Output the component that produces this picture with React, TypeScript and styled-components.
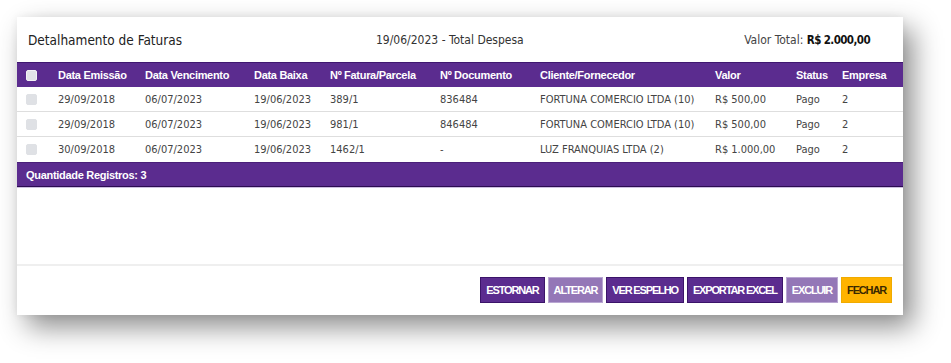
import React from "react";
import styled, { createGlobalStyle } from "styled-components";

const GlobalStyle = createGlobalStyle`
  html, body { margin: 0; padding: 0; background: #ffffff; }
  body { font-family: "DejaVu Sans Condensed", "DejaVu Sans", sans-serif; }
  * { box-sizing: border-box; }
`;

const COLS = "41px 87px 109px 76px 110px 100px 175px 81px 46px 61px";
const PURPLE = "#5b2c8f";

const Page = styled.div`
  padding: 17px 0 0 17px;
  width: 951px;
  height: 363px;
  overflow: hidden;
`;

const Panel = styled.div`
  width: 886px;
  background: #fff;
  display: flex;
  flex-direction: column;
  box-shadow: 10px 12px 26px rgba(0, 0, 0, 0.45), 0 0 8px rgba(0, 0, 0, 0.06);
`;

const TopBar = styled.div`
  height: 45px;
  display: grid;
  grid-template-columns: 348px auto 1fr;
  align-items: center;
  padding: 0 33px 0 11px;
`;

const Title = styled.div`
  font-size: 13.5px;
  color: #222;
`;

const Subtitle = styled.div`
  font-size: 12px;
  color: #333;
`;

const Total = styled.div`
  justify-self: end;
  font-size: 12px;
  color: #444;
  white-space: nowrap;
  b {
    font-size: 11.5px;
    letter-spacing: -0.6px;
    color: #111;
    font-weight: bold;
  }
`;

const HeadRow = styled.div`
  display: grid;
  grid-template-columns: ${COLS};
  height: 25px;
  align-items: center;
  background: ${PURPLE};
  border-top: 1px solid #3f1770;
  color: #fff;
  font-family: "Liberation Sans", Arial, sans-serif;
  font-weight: bold;
  font-size: 11px;
  letter-spacing: -0.3px;
  white-space: nowrap;
`;

const Row = styled.div`
  display: grid;
  grid-template-columns: ${COLS};
  height: 25px;
  align-items: center;
  border-bottom: 1px solid #dedede;
  color: #444;
  font-size: 11px;
  white-space: nowrap;
  &:last-of-type {
    border-bottom: none;
  }
`;

const Rows = styled.div`
  display: flex;
  flex-direction: column;
`;

const CheckCell = styled.div`
  padding-left: 9px;
  display: flex;
  align-items: center;
`;

const Check = styled.span<{ $head?: boolean }>`
  display: inline-block;
  width: 11px;
  height: 11px;
  border-radius: 2px;
  background: ${(p) => (p.$head ? "#e2e3e8" : "#dfe1e5")};
  border: 1px solid ${(p) => (p.$head ? "#f2f2f5" : "#dfe1e5")};
`;

const Cell = styled.div`
  overflow: visible;
`;

const QtyBar = styled.div`
  height: 25px;
  display: flex;
  align-items: center;
  padding-left: 9px;
  background: ${PURPLE};
  border-top: 1px solid #4a2079;
  border-bottom: 1px solid #2c0c52;
  box-shadow: 0 1px 0 #cdbfe0;
  color: #fff;
  font-family: "Liberation Sans", Arial, sans-serif;
  font-weight: bold;
  font-size: 11px;
  letter-spacing: -0.3px;
`;

const Spacer = styled.div`
  height: 77px;
`;

const Actions = styled.div`
  border-top: 2px solid #efefef;
  padding: 11px 11px 12px;
  display: flex;
  justify-content: flex-end;
  gap: 3px;
`;

type Variant = "dark" | "light" | "warn";

const Btn = styled.button<{ $v: Variant }>`
  height: 26px;
  padding: 0 5px;
  font-family: "Liberation Sans", Arial, sans-serif;
  font-weight: bold;
  font-size: 11px;
  letter-spacing: -1.15px;
  text-transform: uppercase;
  cursor: pointer;
  background: ${(p) =>
    p.$v === "dark" ? "#5b2c8f" : p.$v === "light" ? "#9477b7" : "#ffb300"};
  color: ${(p) => (p.$v === "warn" ? "#3a2800" : "#fff")};
  border: 1px solid
    ${(p) =>
      p.$v === "dark" ? "#3b1469" : p.$v === "light" ? "#b9a6d2" : "#f0ab00"};
`;

const headers = [
  "Data Emissão",
  "Data Vencimento",
  "Data Baixa",
  "Nº Fatura/Parcela",
  "Nº Documento",
  "Cliente/Fornecedor",
  "Valor",
  "Status",
  "Empresa",
];

const data = [
  ["29/09/2018", "06/07/2023", "19/06/2023", "389/1", "836484", "FORTUNA COMERCIO LTDA (10)", "R$ 500,00", "Pago", "2"],
  ["29/09/2018", "06/07/2023", "19/06/2023", "981/1", "846484", "FORTUNA COMERCIO LTDA (10)", "R$ 500,00", "Pago", "2"],
  ["30/09/2018", "06/07/2023", "19/06/2023", "1462/1", "-", "LUZ FRANQUIAS LTDA (2)", "R$ 1.000,00", "Pago", "2"],
];

const buttons: { label: string; v: Variant }[] = [
  { label: "Estornar", v: "dark" },
  { label: "Alterar", v: "light" },
  { label: "Ver Espelho", v: "dark" },
  { label: "Exportar Excel", v: "dark" },
  { label: "Excluir", v: "light" },
  { label: "Fechar", v: "warn" },
];

export default function App() {
  return (
    <>
      <GlobalStyle />
      <Page>
        <Panel>
          <TopBar>
            <Title>Detalhamento de Faturas</Title>
            <Subtitle>19/06/2023 - Total Despesa</Subtitle>
            <Total>
              Valor Total: <b>R$ 2.000,00</b>
            </Total>
          </TopBar>
          <HeadRow>
            <CheckCell>
              <Check $head />
            </CheckCell>
            {headers.map((h) => (
              <Cell key={h}>{h}</Cell>
            ))}
          </HeadRow>
          <Rows>
            {data.map((r, i) => (
              <Row key={i}>
                <CheckCell>
                  <Check />
                </CheckCell>
                {r.map((c, j) => (
                  <Cell key={j}>{c}</Cell>
                ))}
              </Row>
            ))}
          </Rows>
          <QtyBar>Quantidade Registros: 3</QtyBar>
          <Spacer />
          <Actions>
            {buttons.map((b) => (
              <Btn key={b.label} $v={b.v}>
                {b.label}
              </Btn>
            ))}
          </Actions>
        </Panel>
      </Page>
    </>
  );
}
